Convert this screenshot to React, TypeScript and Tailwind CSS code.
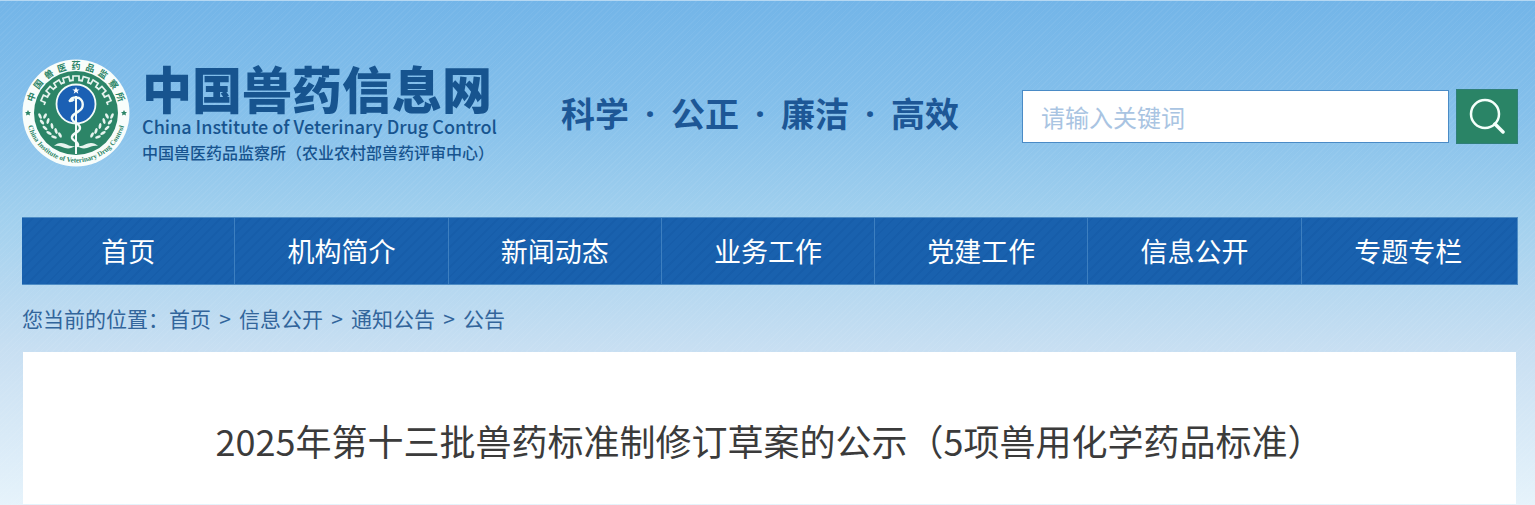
import type { FormEvent } from 'react';

const navItems = ['首页', '机构简介', '新闻动态', '业务工作', '党建工作', '信息公开', '专题专栏'];
const crumbs = ['首页', '信息公开', '通知公告', '公告'];
const sloganWords = ['科学', '公正', '廉洁', '高效'];

const ringChars = [...'中国兽医药品监察所'];
const gearTeeth = [-66, -49, -32, -16, 0, 16, 32, 49, 66];
const leaves = [
  { x: 18, y: 57, r: 65 }, { x: 23, y: 57, r: -60 },
  { x: 20, y: 63, r: 50 }, { x: 26, y: 62, r: -75 },
  { x: 23, y: 69, r: 40 }, { x: 30, y: 67, r: 80 },
  { x: 27, y: 74, r: 30 }, { x: 34, y: 72, r: 70 },
  { x: 32, y: 78, r: 20 }, { x: 38, y: 76, r: 60 },
];

function Branch() {
  return (
    <g fill="#e6f4ee">
      {leaves.map((l) => (
        <ellipse key={`${l.x}-${l.y}`} cx={l.x} cy={l.y} rx="3" ry="1.4" transform={`rotate(${l.r} ${l.x} ${l.y})`} />
      ))}
    </g>
  );
}

function Emblem() {
  return (
    <svg viewBox="0 0 108 108" className="size-27 shrink-0" role="img" aria-label="中国兽医药品监察所">
      <defs>
        <path id="ring-bottom" d="M 4.900 62 A 49.800 49.800 0 0 0 103.100 62" />
      </defs>
      <circle cx="54" cy="54" r="53.5" fill="#f8fdfb" />
      <circle cx="54" cy="54" r="42" fill="#2c8567" />
      <g fontSize="9" fontWeight="700" fill="#2c8567" textAnchor="middle" fontFamily="'Noto Sans CJK SC', sans-serif">
        {ringChars.map((ch, i) => (
          <text key={ch} x="54" y="10" transform={`rotate(${(i - 4) * 17.5} 54 54)`}>{ch}</text>
        ))}
      </g>
      <text fontSize="7" fontWeight="700" fill="#2c8567" fontFamily="'Liberation Serif', serif">
        <textPath href="#ring-bottom" startOffset="50%" textAnchor="middle">China Institute of Veterinary Drug Control</textPath>
      </text>
      <path d="M6 51l1 2h2l-1.500 1.500.5 2-2-1-2 1 .5-2L3 53h2z" fill="#2c8567" />
      <path d="M102 51l1 2h2l-1.500 1.500.5 2-2-1-2 1 .5-2L99 53h2z" fill="#2c8567" />
      <g stroke="#e6f4ee" strokeWidth="1.700" fill="none">
        {gearTeeth.map((a) => (
          <path key={a} d="M48.500 21.500H51V17H57V21.500H59.500" transform={`rotate(${a} 54 54)`} />
        ))}
      </g>
      <circle cx="54" cy="45" r="19.500" fill="#1b60b4" stroke="#f3fbf8" strokeWidth="1.800" />
      <Branch />
      <g transform="translate(108 0) scale(-1 1)"><Branch /></g>
      <path d="M54 28l1 2.500h2.700l-2.200 1.600.8 2.600L54 33.100l-2.300 1.600.8-2.600-2.200-1.600H53z" fill="#fff" />
      <path d="M54 37V95" stroke="#f3fbf8" strokeWidth="2" />
      <path
        d="M48 42C49 38 54 38 57 39C62 42 62 49 57 52C53 55 49 56 50 60C51 64 58 64 58 69C58 74 49 74 50 79C51 83 57 82 56 87"
        fill="none" stroke="#f3fbf8" strokeWidth="2.400" strokeLinecap="round"
      />
      <path d="M46 42l4-3 3 2-3 2z" fill="#f3fbf8" />
      <path d="M53 87c-6 1-9-3-14-3-3 0-5 1-7 3 5-1 7 1 11 2 4 1 7 0 10-2zM55 87c6 1 9-3 14-3 3 0 5 1 7 3-5-1-7 1-11 2-4 1-7 0-10-2z" fill="#e6f4ee" />
    </svg>
  );
}

function SearchBox() {
  return (
    <form className="mt-1.5 ml-auto flex items-center gap-[7px]" onSubmit={(e: FormEvent) => e.preventDefault()}>
      <input
        type="text"
        aria-label="请输入关键词"
        placeholder="请输入关键词"
        className="h-[53px] w-[427px] border border-[#4a8bc6] bg-white px-[18px] text-2xl text-[#1b5a9b] outline-none placeholder:text-[#a9c4e2]"
      />
      <button type="submit" aria-label="搜索" className="flex h-[55px] w-[62px] items-center justify-center border border-[#2f7f78] bg-[#2a8466]">
        <svg viewBox="0 0 36 36" className="size-9" fill="none" stroke="#f4fffa" strokeLinecap="round">
          <circle cx="16" cy="16" r="14" strokeWidth="2.500" />
          <path d="M26 26l8 8" strokeWidth="3.500" />
        </svg>
      </button>
    </form>
  );
}

export default function App() {
  return (
    <div className="min-h-screen border-t border-[#b5d8f3] bg-[repeating-linear-gradient(135deg,#ffffff0c_0_1px,transparent_1px_4px),linear-gradient(to_bottom,#73b5e8_0px,#85c0eb_110px,#a1d0ee_215px,#c8dff2_350px,#e6f3fb_505px)] pr-[17px] pl-[22px] font-['Noto_Sans_CJK_SC',sans-serif]">
      <header className="flex h-54 items-center pt-2">
        <a href="#" className="flex items-center gap-3 text-[#17548f]">
          <Emblem />
          <div className="whitespace-nowrap">
            <div className="text-[50px] leading-[54px] font-black">中国兽药信息网</div>
            <div className="text-lg leading-6 font-medium">China Institute of Veterinary Drug Control</div>
            <div className="text-base leading-7 font-medium">中国兽医药品监察所（农业农村部兽药评审中心）</div>
          </div>
        </a>
        <p className="ml-16 flex items-center text-[34px] leading-10 font-bold whitespace-nowrap text-[#1d5796]">
          {sloganWords.map((word, i) => (
            <span key={word} className="flex items-center">
              {i > 0 && <span className="w-[42px] text-center font-['Noto_Sans']">·</span>}
              {word}
            </span>
          ))}
        </p>
        <SearchBox />
      </header>

      <nav className="border-y border-r border-[#4d8cc5] bg-[#1961ae] bg-[repeating-linear-gradient(135deg,#0e4f9a33_0_2px,transparent_2px_7px)]">
        <ul className="grid grid-cols-7 divide-x divide-[#3d7fc0] pr-0.5">
          {navItems.map((item) => (
            <li key={item}>
              <a href="#" className="block text-center text-[27px] leading-[66px] text-white">{item}</a>
            </li>
          ))}
        </ul>
      </nav>

      <div className="flex h-[67px] items-center text-[21px] text-[#32659b]">
        <span>您当前的位置：</span>
        {crumbs.map((c, i) => (
          <span key={c} className="flex">
            {i > 0 && <span className="w-7 text-center">&gt;</span>}
            <a href="#">{c}</a>
          </span>
        ))}
      </div>

      <main className="mr-0.5 ml-px bg-white px-6 pt-[61px] pb-9">
        <h1 className="text-center text-4xl leading-[55px] text-[#3b3b3b]">2025年第十三批兽药标准制修订草案的公示（5项兽用化学药品标准）</h1>
      </main>
    </div>
  );
}
